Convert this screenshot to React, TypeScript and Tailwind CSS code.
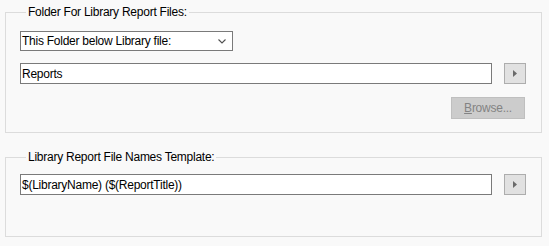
const font = { fontFamily: '"Liberation Sans", Arial, sans-serif' };

function ArrowButton() {
  return (
    <button className="w-[22px] h-[21px] shrink-0 border border-[#adadad] bg-[#e1e1e1] flex items-center justify-center">
      <svg width="4" height="7" viewBox="0 0 4 7">
        <path d="M0 0 L4 3.5 L0 7 Z" fill="#6a6a6a" />
      </svg>
    </button>
  );
}

function TextBox({ value }: { value: string }) {
  return (
    <div className="w-[472px] h-[21px] border border-[#7a7a7a] bg-white flex items-center pl-[1px] text-[12px] tracking-[-0.25px] text-black leading-none">
      {value}
    </div>
  );
}

export default function App() {
  return (
    <div className="w-[549px] h-[246px] bg-[#f9f9f9] pl-[5px] pt-[4px]" style={font}>
      {/* Folder group */}
      <fieldset className="w-[537px] border border-[#dcdcdc] pl-[14px] pb-[13px]">
        <legend className="ml-[6px] px-[2px] text-[12px] tracking-[-0.25px] leading-[16px] text-black">
          Folder For Library Report Files:
        </legend>
        <div className="mt-[11px] w-[213px] h-[20px] border border-[#7a7a7a] bg-white flex items-center justify-between pl-[1px] pr-[6px] text-[12px] tracking-[-0.25px] text-black">
          <span>This Folder below Library file:</span>
          <svg width="8" height="5" viewBox="0 0 8 5">
            <path d="M0.5 0.5 L4 4 L7.5 0.5" fill="none" stroke="#505050" strokeWidth="1.1" />
          </svg>
        </div>
        <div className="mt-[12px] flex gap-[12px]">
          <TextBox value="Reports" />
          <ArrowButton />
        </div>
        <div className="mt-[13px] flex justify-end pr-[16px]">
          <button className="w-[74px] h-[22px] border border-[#bfbfbf] bg-[#cccccc] text-[12px] tracking-[-0.25px] text-[#838383]">
            <span className="underline">B</span>rowse...
          </button>
        </div>
      </fieldset>

      {/* Template group */}
      <fieldset className="mt-[16px] w-[537px] h-[88px] border border-[#dcdcdc] pl-[14px]">
        <legend className="ml-[6px] px-[2px] text-[12px] tracking-[-0.25px] leading-[16px] text-black">
          Library Report File Names Template:
        </legend>
        <div className="mt-[9px] flex gap-[12px]">
          <TextBox value="$(LibraryName) ($(ReportTitle))" />
          <ArrowButton />
        </div>
      </fieldset>
    </div>
  );
}
